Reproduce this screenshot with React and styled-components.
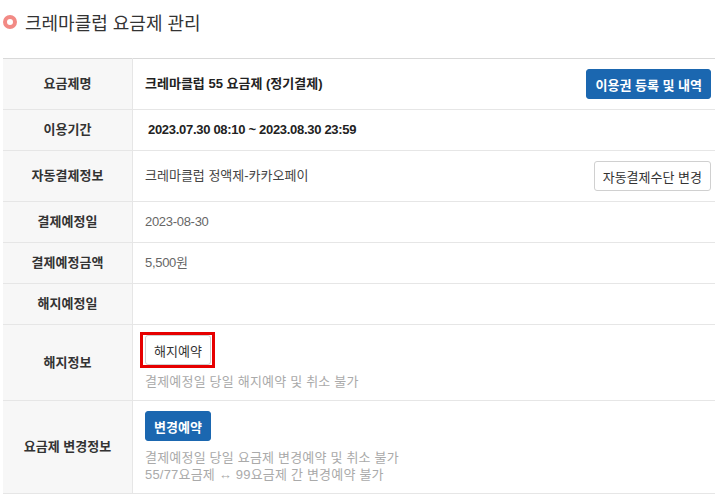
import styled, { createGlobalStyle } from "styled-components";

const GlobalStyle = createGlobalStyle`
  html, body {
    margin: 0;
    padding: 0;
    background: #fff;
    overflow: hidden;
  }
  body {
    font-family: "Liberation Sans", "Noto Sans CJK KR", sans-serif;
    color: #333;
  }
`;

const Page = styled.div`
  padding: 10px 0 0 3px;
  width: 712px;
`;

const Title = styled.h2`
  display: flex;
  align-items: center;
  gap: 8px;
  margin: 0 0 24px;
  height: 24px;
  font-size: 18px;
  font-weight: 400;
  color: #333;
`;

const Ring = styled.span`
  width: 14px;
  height: 14px;
  box-sizing: border-box;
  border: 4px solid #f28a85;
  border-radius: 50%;
`;

const Table = styled.table`
  width: 100%;
  border-collapse: collapse;
  border-top: 1px solid #d9d9d9;
  border-bottom: 1px solid #dcdcdc;
  font-size: 13px;
`;

const Row = styled.tr`
  border-bottom: 1px solid #e6e6e6;
`;

const Label = styled.th`
  width: 129px;
  background: #f7f7f7;
  border-right: 1px solid #e6e6e6;
  font-weight: 700;
  color: #333;
  text-align: center;
  line-height: 20px;
  padding: 10px 0;
`;

const Cell = styled.td`
  padding: 10px 4px 10px 12px;
  line-height: 20px;
  vertical-align: middle;
`;

const Line = styled.div`
  display: flex;
  align-items: center;
  justify-content: space-between;
`;

const Value = styled.span`
  font-weight: ${(p) => (p.$bold ? 700 : 400)};
  color: ${(p) => p.$color || "#333"};
  padding-left: ${(p) => p.$indent || 0}px;
  letter-spacing: ${(p) => (p.$numeric ? "-0.3px" : "0")};
`;

const Button = styled.button`
  position: relative;
  height: 30px;
  padding: 0 8px;
  border-radius: 3px;
  font-family: inherit;
  font-size: 13px;
  font-weight: ${(p) => (p.$primary ? 700 : 400)};
  color: ${(p) => (p.$primary ? "#fff" : "#333")};
  background: ${(p) => (p.$primary ? "#1b67b0" : "#fff")};
  border: 1px solid ${(p) => (p.$primary ? "#1b67b0" : "#d0d0d0")};
  cursor: pointer;
  ${(p) =>
    p.$marked &&
    `
    &::after {
      content: "";
      position: absolute;
      top: -4px;
      left: -6px;
      right: -5px;
      bottom: -4px;
      border: 3px solid #e60000;
    }
  `}
`;

const Notes = styled.div`
  margin-top: 8px;
  color: #aaa;
  line-height: 17px;
  letter-spacing: 0.2px;
`;

export default function App() {
  return (
    <>
      <GlobalStyle />
      <Page>
        <Title>
          <Ring />
          크레마클럽 요금제 관리
        </Title>
        <Table>
          <tbody>
            <Row>
              <Label>요금제명</Label>
              <Cell>
                <Line>
                  <Value $bold $color="#222">크레마클럽 55 요금제 (정기결제)</Value>
                  <Button $primary>이용권 등록 및 내역</Button>
                </Line>
              </Cell>
            </Row>
            <Row>
              <Label>이용기간</Label>
              <Cell>
                <Value $bold $numeric $color="#222" $indent={3}>
                  2023.07.30 08:10 ~ 2023.08.30 23:59
                </Value>
              </Cell>
            </Row>
            <Row>
              <Label>자동결제정보</Label>
              <Cell>
                <Line>
                  <Value $color="#444">크레마클럽 정액제-카카오페이</Value>
                  <Button>자동결제수단 변경</Button>
                </Line>
              </Cell>
            </Row>
            <Row>
              <Label>결제예정일</Label>
              <Cell>
                <Value $numeric $color="#666">2023-08-30</Value>
              </Cell>
            </Row>
            <Row>
              <Label>결제예정금액</Label>
              <Cell>
                <Value $numeric $color="#666">5,500원</Value>
              </Cell>
            </Row>
            <Row>
              <Label>해지예정일</Label>
              <Cell />
            </Row>
            <Row>
              <Label>해지정보</Label>
              <Cell>
                <Button $marked>해지예약</Button>
                <Notes>결제예정일 당일 해지예약 및 취소 불가</Notes>
              </Cell>
            </Row>
            <Row>
              <Label>요금제 변경정보</Label>
              <Cell>
                <Button $primary>변경예약</Button>
                <Notes>
                  결제예정일 당일 요금제 변경예약 및 취소 불가
                  <br />
                  55/77요금제 ↔ 99요금제 간 변경예약 불가
                </Notes>
              </Cell>
            </Row>
          </tbody>
        </Table>
      </Page>
    </>
  );
}
